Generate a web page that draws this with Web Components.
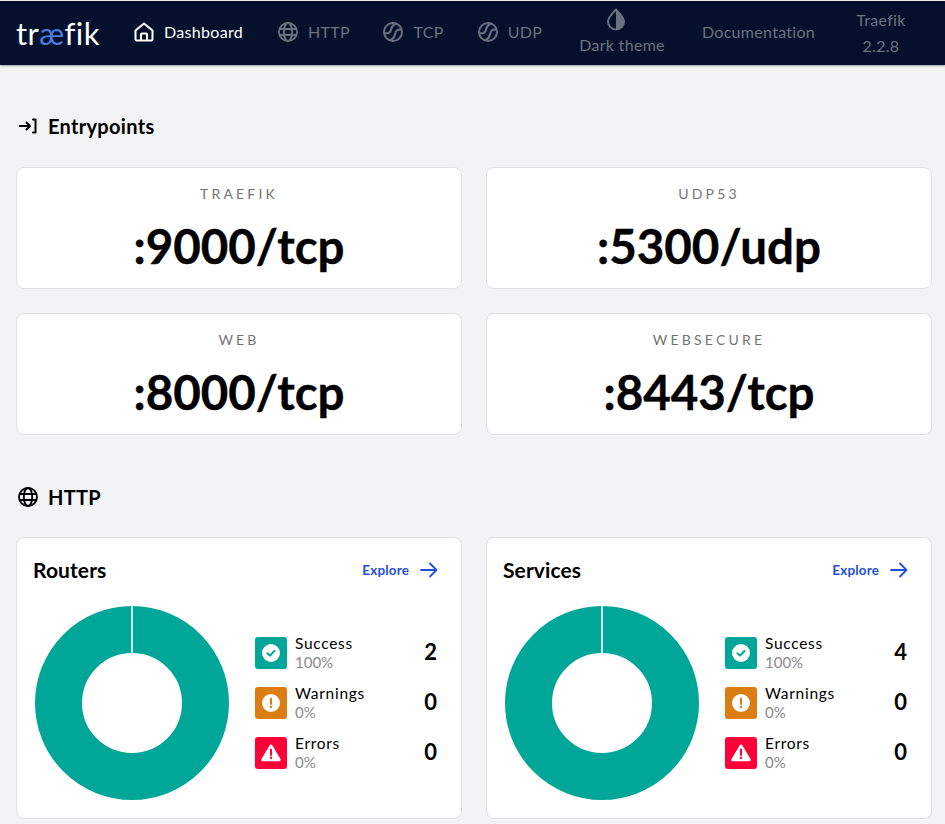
<!DOCTYPE html>
<html>
<head>
<meta charset="utf-8">
<title>Traefik</title>
<style>
  html, body { margin: 0; padding: 0; background: #f2f3f5; }
  body { font-family: Lato, "Open Sans", sans-serif; color: #000; }
</style>
</head>
<body>
<app-header></app-header>
<dash-page></dash-page>

<script>
const ICONS = {
  home: `<svg width="20" height="20" viewBox="0 0 20 20" fill="none" stroke="currentColor" stroke-width="2" stroke-linejoin="round"><path d="M1.500 8.600 10 1.400l8.500 7.200v8.400a1.600 1.600 0 0 1-1.600 1.600H3.100a1.600 1.600 0 0 1-1.600-1.600z"/><path d="M7 18.600v-6.200a1 1 0 0 1 1-1h4a1 1 0 0 1 1 1v6.200"/></svg>`,
  globe: `<svg width="20" height="20" viewBox="0 0 20 20" fill="none" stroke="currentColor" stroke-width="1.900"><circle cx="10" cy="10" r="9"/><ellipse cx="10" cy="10" rx="4.200" ry="9"/><path d="M1.400 7h17.200M1.400 13h17.200"/></svg>`,
  ball: `<svg width="20" height="20" viewBox="0 0 20 20" fill="none" stroke="currentColor" stroke-width="2" stroke-linecap="round"><circle cx="10" cy="10" r="9"/><path d="M1.800 11.200c3.400.6 5.600-.8 6.300-4 .5-2.400 2-4.400 4.700-5.600"/><path d="M18.200 7.500c-3.300-.5-5.400 1-6 4.200-.5 2.800-1.800 5-4.500 6.300"/></svg>`,
  drop: `<svg width="20" height="24" viewBox="0 0 20 24"><path d="M10 1.500C6.500 5.500 2 9.500 2 13.500a8 8 0 0 0 16 0C18 9.500 13.500 5.500 10 1.500z" fill="none" stroke="currentColor" stroke-width="2" stroke-linejoin="round"/><path d="M10 1.500C13.500 5.500 18 9.500 18 13.500a8 8 0 0 1-8 8z" fill="currentColor"/></svg>`,
  entry: `<svg width="20" height="20" viewBox="0 0 20 20" fill="none" stroke="currentColor" stroke-width="2" stroke-linecap="round" stroke-linejoin="round"><path d="M2 10h9.500M8.500 6.500 12 10l-3.500 3.500M15 3.500h2.500v13H15"/></svg>`,
  arrow: `<svg width="18" height="16" viewBox="0 0 18 16" fill="none" stroke="currentColor" stroke-width="1.800" stroke-linecap="round" stroke-linejoin="round"><path d="M1 8h15.500M10 1.500 16.500 8 10 14.500"/></svg>`,
  success: `<svg width="18" height="18" viewBox="0 0 18 18"><circle cx="9" cy="9" r="9" fill="#fff"/><path d="M5.500 9.200 8 11.600l4.600-4.800" fill="none" stroke="#00a697" stroke-width="2" stroke-linecap="round" stroke-linejoin="round"/></svg>`,
  warning: `<svg width="18" height="18" viewBox="0 0 18 18"><circle cx="9" cy="9" r="9" fill="#fff"/><path d="M9 4.500v5.500" stroke="#db7d11" stroke-width="2" stroke-linecap="round"/><circle cx="9" cy="13" r="1.200" fill="#db7d11"/></svg>`,
  error: `<svg width="20" height="18" viewBox="0 0 20 18"><path d="M10 2 1.800 15.800h16.400z" fill="#fff" stroke="#fff" stroke-width="3" stroke-linejoin="round"/><path d="M10 5.500v5.500" stroke="#ff0039" stroke-width="2" stroke-linecap="round"/><circle cx="10" cy="13.800" r="1.200" fill="#ff0039"/></svg>`
}

class NavTab extends HTMLElement {
  constructor() {
    super()
    this.attachShadow({mode: 'open'})
  }

  connectedCallback() {
    const icon = this.getAttribute('icon')
    const stacked = this.hasAttribute('stacked')
    this.shadowRoot.innerHTML = `
      <style>
        :host {
          display: flex;
          flex-direction: ${stacked ? 'column' : 'row'};
          align-items: center;
          justify-content: center;
          gap: ${stacked ? '3px' : '10px'};
          box-sizing: border-box;
          height: 64px;
          padding-bottom: ${stacked ? '4px' : '2px'};
          flex: none;
          color: #6c7180;
          font-size: 16px;
          letter-spacing: .3px;
          line-height: 20px;
          white-space: nowrap;
        }
        :host([active]) { color: #fff; }
        .icon { display: flex; ${stacked ? 'margin-left: -12px;' : ''} }
      </style>
      ${icon ? `<span class="icon">${ICONS[icon]}</span>` : ''}
      <slot></slot>
    `
  }
}

class AppHeader extends HTMLElement {
  constructor() {
    super()
    this.attachShadow({mode: 'open'})
    this.shadowRoot.innerHTML = `
      <style>
        :host {
          display: flex;
          align-items: center;
          height: 64px;
          margin-top: 1px;
          padding-left: 16px;
          background: #05112c;
          box-shadow: 0 1px 2px rgba(0, 0, 0, .35);
          position: relative;
        }
        .logo {
          font-size: 31px;
          letter-spacing: .5px;
          color: #fff;
          width: 118px;
          flex: none;
        }
        .logo b { font-weight: 400; color: #4a7de0; }
        .version {
          display: flex;
          flex-direction: column;
          align-items: center;
          line-height: 26px;
          padding-top: 2px;
        }
      </style>
      <span class="logo">tr<b>æ</b>fik</span>
      <nav-tab icon="home" active style="width:109px">Dashboard</nav-tab>
      <nav-tab icon="globe" style="width:72px;margin-left:35px">HTTP</nav-tab>
      <nav-tab icon="ball" style="width:61px;margin-left:33px">TCP</nav-tab>
      <nav-tab icon="ball" style="width:64px;margin-left:34px">UDP</nav-tab>
      <nav-tab icon="drop" stacked style="width:84px;margin-left:38px">Dark theme</nav-tab>
      <nav-tab style="width:111px;margin-left:39px">Documentation</nav-tab>
      <nav-tab style="width:50px;margin-left:42px"><span class="version"><span>Traefik</span><span>2.2.8</span></span></nav-tab>
    `
  }
}

class SectionTitle extends HTMLElement {
  constructor() {
    super()
    this.attachShadow({mode: 'open'})
  }

  connectedCallback() {
    this.shadowRoot.innerHTML = `
      <style>
        :host {
          display: flex;
          align-items: center;
          gap: 10px;
          height: 28px;
          padding-left: 2px;
          font-size: 20px;
          letter-spacing: .3px;
          font-weight: 700;
        }
        span { display: flex; }
      </style>
      <span>${ICONS[this.getAttribute('icon')]}</span>
      <slot></slot>
    `
  }
}

class EntryCard extends HTMLElement {
  constructor() {
    super()
    this.attachShadow({mode: 'open'})
  }

  connectedCallback() {
    this.shadowRoot.innerHTML = `
      <style>
        :host {
          display: flex;
          flex-direction: column;
          align-items: center;
          box-sizing: border-box;
          height: 122px;
          padding-top: 16px;
          background: #fff;
          border: 1px solid #dfe1e5;
          border-radius: 8px;
        }
        .name {
          font-size: 14px;
          line-height: 20px;
          letter-spacing: 3.200px;
          color: #737373;
        }
        .port {
          font-size: 47.500px;
          line-height: 60px;
          font-weight: 700;
          margin-top: 12px;
          -webkit-text-stroke: .4px #000;
        }
      </style>
      <div class="name">${this.getAttribute('name')}</div>
      <div class="port"><slot></slot></div>
    `
  }
}

class StatRow extends HTMLElement {
  constructor() {
    super()
    this.attachShadow({mode: 'open'})
  }

  connectedCallback() {
    const kind = this.getAttribute('kind')
    const colors = {success: '#00a697', warning: '#db7d11', error: '#ff0039'}
    this.shadowRoot.innerHTML = `
      <style>
        :host {
          display: grid;
          grid-template-columns: 32px 1fr auto;
          grid-template-rows: 32px;
          align-items: center;
          column-gap: 8px;
          height: 32px;
        }
        .badge {
          width: 32px;
          height: 32px;
          border-radius: 3px;
          background: ${colors[kind]};
          display: flex;
          align-items: center;
          justify-content: center;
        }
        .text { margin-bottom: 2px; }
        .label { font-size: 15.500px; line-height: 18px; letter-spacing: .7px; margin-bottom: 1px; }
        .pct { font-size: 15px; line-height: 18px; color: #8a8a8a; }
        .val { font-size: 22px; font-weight: 700; padding-bottom: 4px; }
      </style>
      <div class="badge">${ICONS[kind]}</div>
      <div class="text">
        <div class="label">${this.getAttribute('label')}</div>
        <div class="pct">${this.getAttribute('pct')}</div>
      </div>
      <div class="val"><slot></slot></div>
    `
  }
}

class StatCard extends HTMLElement {
  constructor() {
    super()
    this.attachShadow({mode: 'open'})
  }

  connectedCallback() {
    this.shadowRoot.innerHTML = `
      <style>
        :host {
          display: block;
          box-sizing: border-box;
          height: 282px;
          padding: 16px 24px 0 16px;
          background: #fff;
          border: 1px solid #dfe1e5;
          border-radius: 8px;
        }
        .head {
          display: flex;
          align-items: center;
          justify-content: space-between;
          height: 32px;
        }
        .title { font-size: 21px; font-weight: 700; letter-spacing: .1px; padding-bottom: 2px; }
        .explore {
          display: flex;
          align-items: center;
          gap: 11px;
          margin-right: -1px;
          font-size: 13.500px;
          letter-spacing: .15px;
          font-weight: 700;
          color: #1f50d8;
        }
        .explore span { display: flex; }
        .body {
          display: flex;
          align-items: center;
          margin-top: 20px;
        }
        svg.donut { flex: none; margin-left: 2px; }
        .stats {
          flex: 1;
          display: flex;
          flex-direction: column;
          gap: 18px;
          margin-left: 26px;
        }
      </style>
      <div class="head">
        <div class="title">${this.getAttribute('title')}</div>
        <div class="explore">Explore <span>${ICONS.arrow}</span></div>
      </div>
      <div class="body">
        <svg class="donut" width="194" height="194" viewBox="0 0 194 194">
          <circle cx="97" cy="97" r="73.500" fill="none" stroke="#00a697" stroke-width="47"/>
          <rect x="96.200" y="0" width="1.600" height="48" fill="#fff"/>
        </svg>
        <div class="stats"><slot></slot></div>
      </div>
    `
  }
}

class DashPage extends HTMLElement {
  constructor() {
    super()
    this.attachShadow({mode: 'open'})
    this.shadowRoot.innerHTML = `
      <style>
        :host { display: block; padding: 47px 13px 0 16px; }
        .grid {
          display: grid;
          grid-template-columns: 446px 446px;
          gap: 24px;
        }
        .entries { margin: 27px 0 48px; }
        .stats { margin-top: 26px; }
      </style>
      <section-title icon="entry">Entrypoints</section-title>
      <div class="grid entries">
        <entry-card name="TRAEFIK">:9000/tcp</entry-card>
        <entry-card name="UDP53">:5300/udp</entry-card>
        <entry-card name="WEB">:8000/tcp</entry-card>
        <entry-card name="WEBSECURE">:8443/tcp</entry-card>
      </div>
      <section-title icon="globe">HTTP</section-title>
      <div class="grid stats">
        <stat-card title="Routers">
          <stat-row kind="success" label="Success" pct="100%">2</stat-row>
          <stat-row kind="warning" label="Warnings" pct="0%">0</stat-row>
          <stat-row kind="error" label="Errors" pct="0%">0</stat-row>
        </stat-card>
        <stat-card title="Services">
          <stat-row kind="success" label="Success" pct="100%">4</stat-row>
          <stat-row kind="warning" label="Warnings" pct="0%">0</stat-row>
          <stat-row kind="error" label="Errors" pct="0%">0</stat-row>
        </stat-card>
      </div>
    `
  }
}

customElements.define('nav-tab', NavTab)
customElements.define('app-header', AppHeader)
customElements.define('section-title', SectionTitle)
customElements.define('entry-card', EntryCard)
customElements.define('stat-row', StatRow)
customElements.define('stat-card', StatCard)
customElements.define('dash-page', DashPage)
</script>
</body>
</html>
